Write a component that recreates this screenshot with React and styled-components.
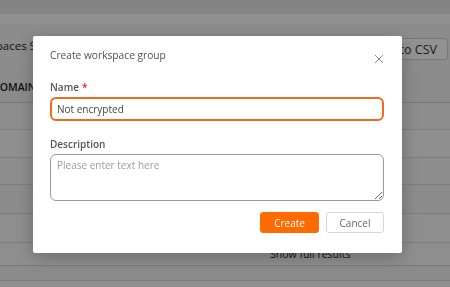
import React from "react";
import styled, { createGlobalStyle } from "styled-components";

const Global = createGlobalStyle`
  html, body {
    margin: 0;
    padding: 0;
    width: 450px;
    height: 287px;
    overflow: hidden;
    font-family: "Open Sans", "Noto Sans", sans-serif;
    background: #f2f2f2;
  }
`;

const Page = styled.div`
  width: 450px;
  height: 287px;
  overflow: hidden;
  display: flex;
  flex-direction: column;
  background: #efefef;
  & > * {
    flex-shrink: 0;
  }
`;

const TopBar = styled.div`
  height: 14px;
  background: #e4e4e4;
`;

const SubBar = styled.div`
  height: 10px;
  background: #fafafa;
`;

const Toolbar = styled.div`
  height: 48px;
  display: flex;
  justify-content: space-between;
  align-items: flex-start;
  padding-top: 14px;
  box-sizing: border-box;
  background: #f1f1f1;
`;

const PageTitle = styled.div`
  margin-left: -38px;
  font-size: 11.5px;
  color: #222;
  line-height: 14px;
  padding-top: 1px;
`;

const ExportButton = styled.div`
  margin-right: 2px;
  height: 22px;
  padding: 0 10px 0 10px;
  border: 1px solid #cfcfcf;
  border-radius: 3px;
  background: #fbfbfb;
  font-size: 12.5px;
  color: #333;
  display: flex;
  align-items: center;
  box-sizing: border-box;
`;

const HeaderRow = styled.div`
  height: 30px;
  display: flex;
  align-items: center;
  border-bottom: 1px solid #d0d0d0;
  background: #f0f0f0;
  font-size: 10.5px;
  font-weight: 600;
  color: #222;
`;

const HeadCell = styled.span`
  margin-left: -8px;
`;

const Row = styled.div`
  height: ${(p) => p.$h}px;
  background: ${(p) => p.$bg};
  border-bottom: 1px solid #d8d8d8;
`;

const FooterRow = styled.div`
  height: 22px;
  background: #f4f4f4;
  border-bottom: 1px solid #d0d0d0;
  display: flex;
  align-items: center;
  padding-left: 270px;
  font-size: 10.5px;
  color: #222;
`;

const Overlay = styled.div`
  position: fixed;
  inset: 0;
  background: rgba(0, 0, 0, 0.42);
  display: flex;
  align-items: flex-start;
  padding: 36px 0 0 33px;
  box-sizing: border-box;
`;

const Modal = styled.div`
  width: 369px;
  height: 217px;
  background: #fff;
  border-radius: 2px;
  box-shadow: 0 4px 18px rgba(0, 0, 0, 0.25);
  padding: 11px 18px 20px 17px;
  box-sizing: border-box;
  display: flex;
  flex-direction: column;
`;

const ModalHead = styled.div`
  display: flex;
  justify-content: space-between;
  align-items: flex-start;
  height: 32px;
`;

const ModalTitle = styled.div`
  font-size: 10.2px;
  line-height: 16px;
  color: #4f4f4f;
`;

const CloseButton = styled.button`
  border: none;
  background: none;
  padding: 0;
  margin: 7px 0 0 0;
  width: 10px;
  height: 10px;
  display: flex;
  cursor: pointer;
`;

const Field = styled.div`
  display: flex;
  flex-direction: column;
  margin-bottom: ${(p) => p.$mb || 0}px;
`;

const Label = styled.label`
  font-size: 10px;
  font-weight: 600;
  color: #555;
  line-height: 16px;
  margin-bottom: 2px;
`;

const Required = styled.span`
  color: #d9262c;
  margin-left: 3px;
`;

const TextInput = styled.input`
  height: 24px;
  box-sizing: border-box;
  border: 2px solid #f26a1b;
  border-radius: 6px;
  padding: 0 5px;
  font-family: inherit;
  font-size: 10px;
  color: #444;
  outline: none;
`;

const TextArea = styled.textarea`
  height: 47px;
  box-sizing: border-box;
  border: 1px solid #9a9a9a;
  border-radius: 6px;
  padding: 3px 6px;
  font-family: inherit;
  font-size: 10px;
  color: #444;
  outline: none;
  resize: vertical;
  &::placeholder {
    color: #9c9c9c;
  }
`;

const Actions = styled.div`
  display: flex;
  justify-content: flex-end;
  gap: 7px;
  margin-top: auto;
`;

const Button = styled.button`
  height: 21px;
  width: ${(p) => p.$w}px;
  border-radius: 3px;
  font-family: inherit;
  font-size: 10px;
  border: 1px solid ${(p) => (p.$primary ? "#ff6b00" : "#d6d6d6")};
  background: ${(p) => (p.$primary ? "#ff6b00" : "#fff")};
  color: ${(p) => (p.$primary ? "#fff" : "#666")};
  padding: 0;
  cursor: pointer;
`;

const rows = [
  { h: 26, bg: "#f3f3f3" },
  { h: 27, bg: "#f6f6f6" },
  { h: 26, bg: "#f3f3f3" },
  { h: 28, bg: "#f1f1f1" },
  { h: 28, bg: "#f4f4f4" },
];

export default function App() {
  return (
    <>
      <Global />
      <Page>
        <TopBar />
        <SubBar />
        <Toolbar>
          <PageTitle>Workspaces Summary</PageTitle>
          <ExportButton>Export to CSV</ExportButton>
        </Toolbar>
        <HeaderRow>
          <HeadCell>DOMAIN_NAME</HeadCell>
        </HeaderRow>
        {rows.map((r, i) => (
          <Row key={i} $h={r.h} $bg={r.bg} />
        ))}
        <FooterRow>Show full results</FooterRow>
        <Row $h={14} $bg="#f0f0f0" />
        <Row $h={30} $bg="#f6f6f6" />
      </Page>
      <Overlay>
        <Modal>
          <ModalHead>
            <ModalTitle>Create workspace group</ModalTitle>
            <CloseButton aria-label="Close">
              <svg width="10" height="10" viewBox="0 0 10 10">
                <path d="M1 1L9 9M9 1L1 9" stroke="#8c8c8c" strokeWidth="1" fill="none" />
              </svg>
            </CloseButton>
          </ModalHead>
          <Field $mb={15}>
            <Label>
              Name<Required>*</Required>
            </Label>
            <TextInput defaultValue="Not encrypted" />
          </Field>
          <Field>
            <Label>Description</Label>
            <TextArea placeholder="Please enter text here" />
          </Field>
          <Actions>
            <Button $primary $w={59}>Create</Button>
            <Button $w={58}>Cancel</Button>
          </Actions>
        </Modal>
      </Overlay>
    </>
  );
}
